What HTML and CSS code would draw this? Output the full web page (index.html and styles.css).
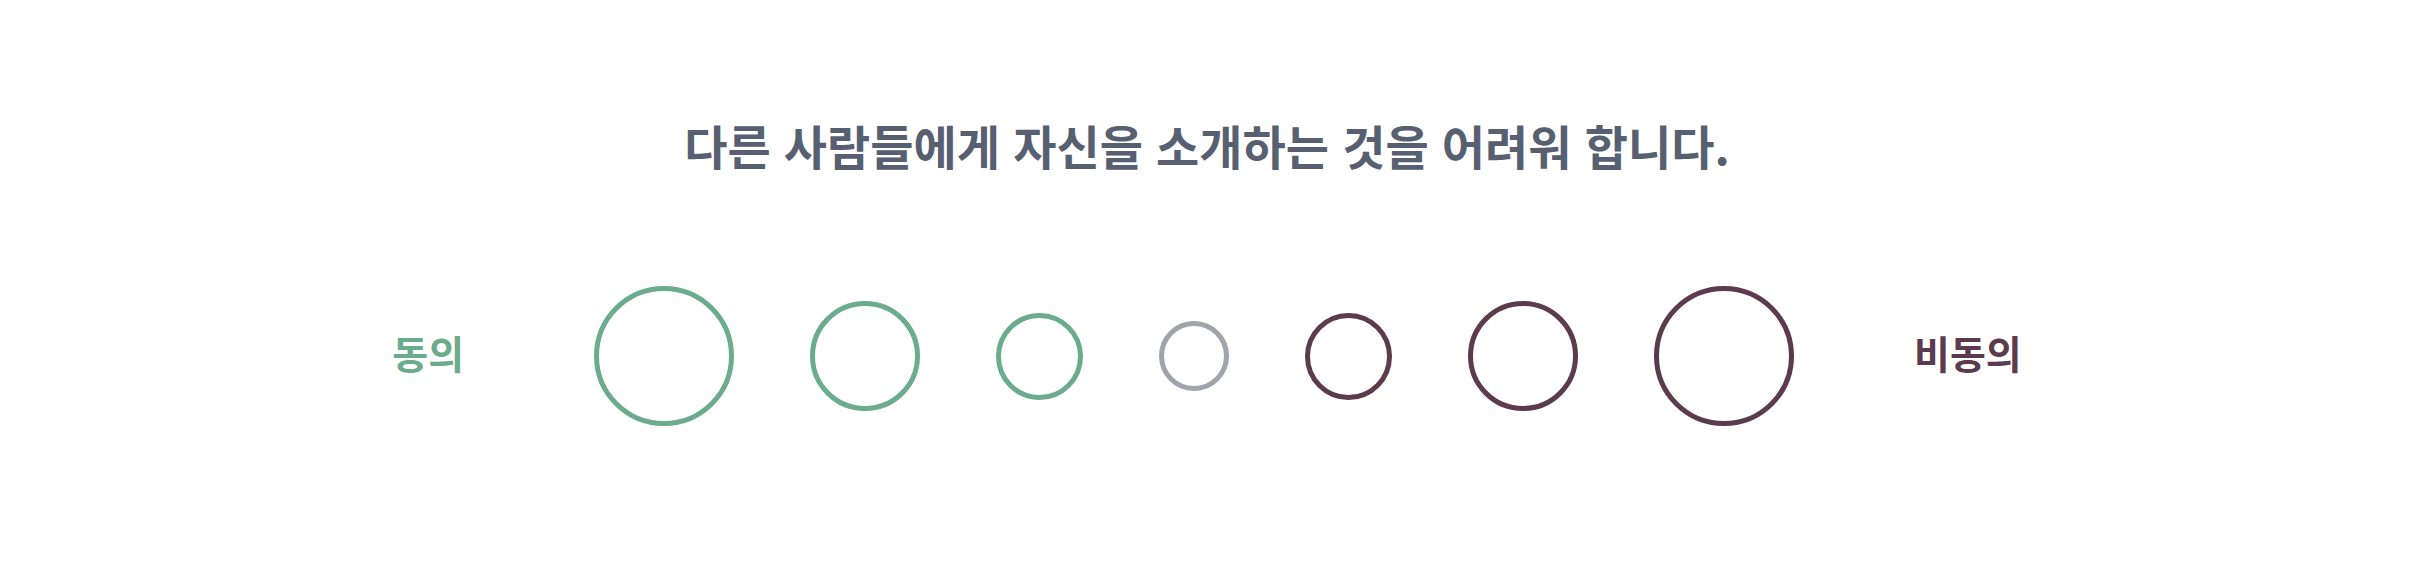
FILE: index.html
```html
<!DOCTYPE html>
<html lang="ko">
<head>
<meta charset="utf-8">
<link rel="stylesheet" href="styles.css">
</head>
<body>
<main class="question">
  <h1 class="statement">다른 사람들에게 자신을 소개하는 것을 어려워 합니다.</h1>
  <div class="scale">
    <span class="label label-agree">동의</span>
    <div class="options">
      <span class="opt agree size-xl"></span>
      <span class="opt agree size-l"></span>
      <span class="opt agree size-m"></span>
      <span class="opt neutral size-s"></span>
      <span class="opt disagree size-m"></span>
      <span class="opt disagree size-l"></span>
      <span class="opt disagree size-xl"></span>
    </div>
    <span class="label label-disagree">비동의</span>
  </div>
</main>
</body>
</html>
```
FILE: styles.css
```css
html, body {
  margin: 0;
  padding: 0;
  background: #ffffff;
}
body {
  width: 2414px;
  height: 570px;
  font-family: "Noto Sans CJK KR", "Noto Sans", sans-serif;
}
.question {
  display: flex;
  flex-direction: column;
  align-items: center;
  padding-top: 112px;
}
.statement {
  margin: 0;
  font-size: 47px;
  line-height: 66px;
  font-weight: 700;
  color: #576071;
  text-align: center;
}
.scale {
  margin-top: 108px;
  display: flex;
  align-items: center;
  justify-content: center;
}
.label {
  font-size: 39px;
  font-weight: 700;
  line-height: 50px;
  position: relative;
  top: -4px;
}
.label-agree {
  color: #6aac8b;
  margin-right: 130px;
}
.label-disagree {
  color: #5b3b4d;
  margin-left: 120px;
}
.options {
  display: flex;
  align-items: center;
  gap: 76px;
}
.opt {
  display: block;
  box-sizing: border-box;
  border-radius: 50%;
  border: 5px solid;
}
.agree { border-color: #6aac8b; }
.neutral { border-color: #a0a2ac; }
.disagree { border-color: #5b3b4d; }
.size-xl { width: 140px; height: 140px; }
.size-l { width: 110px; height: 110px; }
.size-m { width: 87px; height: 87px; }
.size-s { width: 70px; height: 70px; }
```
